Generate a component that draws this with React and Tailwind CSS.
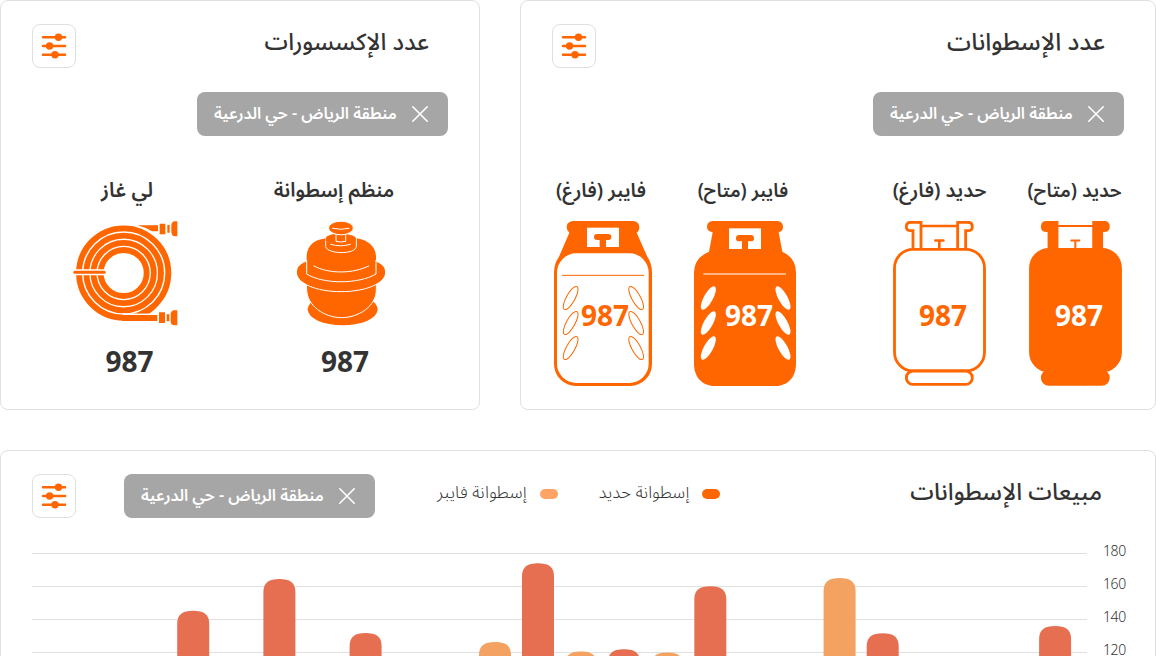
const FONT = "font-['Noto_Sans_Arabic','Noto_Sans',sans-serif]";

function FilterButton() {
  return (
    <button className="flex size-11 shrink-0 items-center justify-center rounded-lg border border-[#e0e0e0] bg-white">
      <svg width="26" height="26" viewBox="0 0 26 26" stroke="#ff6600" strokeWidth="2.5" strokeLinecap="round" fill="#ff6600">
        <path d="M2 4.300H24M2 13H24M2 21.700H24" />
        <g stroke="none">
          <circle cx="17.5" cy="4.3" r="3.7" />
          <circle cx="8.6" cy="13" r="3.7" />
          <circle cx="14" cy="21.7" r="3.7" />
        </g>
      </svg>
    </button>
  );
}

function Chip() {
  return (
    <div className="flex h-11 w-[251px] shrink-0 items-center justify-between rounded-lg bg-[#a6a6a6] pl-[17px] pr-5 text-white">
      <span dir="rtl" className="whitespace-nowrap text-[16.1px] font-semibold leading-6">منطقة الرياض - حي الدرعية</span>
      <svg width="16" height="16" viewBox="0 0 16 16" stroke="currentColor" strokeWidth="1.6" strokeLinecap="round">
        <path d="M0.8 0.8L15.2 15.2M15.2 0.8L0.8 15.2" />
      </svg>
    </div>
  );
}

function Title({ children, className }) {
  return <h2 dir="rtl" className={"mt-px whitespace-nowrap font-medium leading-[35px] text-[#333333] " + className}>{children}</h2>;
}

function IronCylinder({ full }) {
  const thin = full ? 6 : 8;
  return (
    <svg width="93" height="165" viewBox="39 33 279 495" fill="none" stroke="#ff6600" strokeWidth="8.5">
      <path fill={full ? "#ff6600" : "none"} d="M123 117V37H92Q79 37 79 50Q79 62 92 62H99V117" />
      <path fill={full ? "#ff6600" : "none"} d="M233 117V37H264Q277 37 277 50Q277 62 264 62H257V117" />
      <path strokeWidth={thin} d="M124 48H232M178 92V116" />
      <path strokeWidth={thin} strokeLinecap="round" d="M166 91.5H190" />
      <rect x="43.5" y="118" width="270" height="365" rx="56" fill={full ? "#ff6600" : "white"} />
      <rect x="79" y="483" width="198" height="40" rx="20" fill={full ? "#ff6600" : "white"} />
    </svg>
  );
}

const leaves = [264, 339, 414];

function FiberEmpty() {
  return (
    <svg width="98" height="165" viewBox="42 33 294 495" fill="#ff6600">
      <path d="M98 33H280Q298 35 298 52Q298 64 290 68L322 140Q336 160 336 188V462A66 66 0 0 1 270 528H108A66 66 0 0 1 42 462V188Q42 160 57 140L88 68Q80 62 80 52Q80 35 98 33Z" />
      <rect x="51" y="130" width="275" height="389" rx="58" fill="white" />
      <path fill="white" d="M141 53H237V111H141Z" />
      <rect x="162" y="72" width="52" height="18" rx="9" />
      <path d="M179 88H198V113H179Z" />
      <path d="M66 196H312" stroke="#ff6600" strokeWidth="3" />
      {leaves.map((y) => (
        <g key={y} fill="none" stroke="#ff6600" strokeWidth="3">
          <ellipse cx="92" cy={y} rx="13" ry="39" transform={`rotate(29 92 ${y})`} />
          <ellipse cx="288.5" cy={y} rx="13" ry="39" transform={`rotate(-29 288.5 ${y})`} />
        </g>
      ))}
    </svg>
  );
}

function FiberFull() {
  return (
    <svg width="102" height="165" viewBox="462 33 306 495" fill="#ff6600">
      <path d="M518 33H712Q729 35 729 51Q729 64 716 67L727 125Q768 144 768 188V466Q764 520 714 528H516Q466 520 462 466V188Q462 144 507 125L518 67Q501 64 501 51Q501 35 518 33Z" />
      <path fill="white" d="M567 55H663V117H567Z" />
      <rect x="588" y="75" width="54" height="19" rx="9.5" />
      <path d="M606 90H624V119H606Z" />
      <path d="M490 192H738" stroke="#ffd0b0" strokeWidth="4" />
      {leaves.map((y) => (
        <g key={y} fill="white">
          <ellipse cx="505" cy={y} rx="13.5" ry="39.5" transform={`rotate(29 505 ${y})`} />
          <ellipse cx="729" cy={y} rx="13.5" ry="39.5" transform={`rotate(-29 729 ${y})`} />
        </g>
      ))}
    </svg>
  );
}

function Hose() {
  return (
    <svg width="105" height="105" viewBox="68 32 315 315" fill="#ff6600">
      <g fill="none" stroke="#ff6600" strokeWidth="17.5">
        <circle cx="220" cy="188" r="134" />
        <circle cx="220" cy="188" r="112" />
        <circle cx="220" cy="188" r="90.5" />
        <circle cx="220" cy="188" r="69" />
      </g>
      <path fill="white" d="M218 309.500H330V335H218Z" />
      <path d="M258 309Q285 296 305 282L324 284Q312 300 298 309Z" />
      <path d="M214 314H321V332H214Z" />
      <path d="M262 45H323V63H305Q285 51 262 45Z" />
      <path d="M328 40H345V72H328ZM351 44H358V67H351ZM371 33H381V78H371Q363 74 363 66V44Q363 36 371 33Z" />
      <path d="M326 306H344V338H326ZM349 312H357V333H349ZM370 300H381V345H370Q361 342 361 334V311Q361 303 370 300Z" />
      <path fill="white" d="M68 177H166V195H68Z" />
      <rect x="69" y="181" width="97" height="9.5" rx="4.5" />
    </svg>
  );
}

function Regulator() {
  return (
    <svg width="88" height="105" viewBox="741 32 264 315" fill="#ff6600" stroke="white" strokeWidth="3" strokeLinecap="round">
      <ellipse cx="878" cy="297" rx="105" ry="48" stroke="none" />
      <path d="M770 220H979V238C979 288 925 322 875 322C822 322 770 285 770 238Z" />
      <path d="M739 186C739 168 752 158 775 150H972C994 158 1007 168 1007 186C1007 220 945 244 873 244C800 244 739 220 739 186Z" />
      <path stroke="none" d="M770 190V136C772 105 793 88 829 84H919C953 89 977 108 978 138V190C955 222 795 222 770 190Z" />
      <path fill="none" d="M770 150V191C820 222 925 222 978 191V150M792 167C838 192 910 190 956 167" />
      <path d="M827 83V108C830 132 917 134 919 108V83" />
      <path stroke="none" d="M827 83C832 66 912 66 918 84V92H827Z" />
      <path fill="none" d="M842 102Q872 111 901 102" />
      <path d="M858 70V93Q872 97 887 93V70" />
      <ellipse cx="873" cy="53" rx="37.5" ry="20.5" />
      <path fill="none" d="M848 54Q873 60 897 54" />
    </svg>
  );
}

const label = "mb-3.5 mt-px h-8 whitespace-nowrap font-semibold leading-8 text-[#333333] ";

function Product({ name, nameClass, width, tone, shift, children }) {
  return (
    <div className={"flex flex-col items-center " + width}>
      <h3 dir="rtl" className={label + nameClass}>{name}</h3>
      <div className="grid place-items-center">
        <div className="col-start-1 row-start-1">{children}</div>
        <span className={"col-start-1 row-start-1 mt-7 text-[28px] font-bold leading-none " + tone + " " + shift}>987</span>
      </div>
    </div>
  );
}

function Accessory({ name, nameClass, width, pad, children }) {
  return (
    <div className={"flex flex-col items-center " + width}>
      <h3 dir="rtl" className={label + nameClass}>{name}</h3>
      {children}
      <span className={"mt-6 text-[28px] font-bold leading-none text-[#333333] " + pad}>987</span>
    </div>
  );
}

const bars = [
  [145.2, 70.8, "#e76f51"],
  [231.4, 39, "#e76f51"],
  [317.6, 93, "#e76f51"],
  [447, 102, "#f4a261"],
  [490, 23.2, "#e76f51"],
  [533, 111.5, "#f4a261"],
  [576, 109.2, "#e76f51"],
  [619.2, 112.6, "#f4a261"],
  [662.3, 46.3, "#e76f51"],
  [791.6, 38, "#f4a261"],
  [834.7, 93.2, "#e76f51"],
  [1007.1, 86, "#e76f51"],
];

function Chart() {
  return (
    <div className="flex">
      <svg width="1055" height="140" viewBox="0 0 1055 140" className="shrink-0">
        <path d="M0 13.500H1055M0 46.500H1055M0 79.500H1055M0 112.500H1055" stroke="#e0e0e0" />
        {bars.map(([x, y, fill]) => (
          <path key={x} fill={fill} d={`M${x} 140V${y + 13}C${x} ${y + 3.5} ${x + 5.5} ${y} ${x + 16} ${y}S${x + 32} ${y + 3.5} ${x + 32} ${y + 13}V140Z`} />
        ))}
      </svg>
      <div className="flex w-[39px] flex-col gap-[22px] pl-4 pt-1.5 text-left text-sm font-[350] leading-[11px] tracking-[-0.4px] text-[#333333]">
        <div>180</div>
        <div>160</div>
        <div>140</div>
        <div>120</div>
      </div>
    </div>
  );
}

function LegendItem({ name, nameClass, color }) {
  return (
    <div className="flex items-center gap-[13px]">
      <span dir="rtl" className={"whitespace-nowrap font-light leading-6 text-[#333333] " + nameClass}>{name}</span>
      <span className={"mt-0.5 h-2.5 w-[18px] rounded-full " + color} />
    </div>
  );
}

const card = "rounded-lg border border-[#e0e0e0] bg-white";

export default function App() {
  return (
    <main dir="ltr" className={"flex h-[656px] w-[1156px] flex-col gap-10 overflow-hidden bg-white " + FONT}>
      <div className="flex shrink-0 gap-10">
        <section className={"h-[410px] w-[480px] px-[31px] pt-[23px] " + card}>
          <div className="flex items-start justify-between">
            <FilterButton />
            <Title className="mr-[19px] text-[23.6px]">عدد الإكسسورات</Title>
          </div>
          <div className="mt-6 flex justify-end"><Chip /></div>
          <div className="mt-[38px] flex pl-[27px]">
            <Accessory name="لي غاز" nameClass="text-[20.4px]" width="w-[136px]" pad="ml-[5px]"><div className="-ml-[3px]"><Hose /></div></Accessory>
            <Accessory name="منظم إسطوانة" nameClass="-ml-[4px] text-xl" width="ml-[66px] w-[150px]" pad="ml-[18px]"><div className="ml-[9px]"><Regulator /></div></Accessory>
          </div>
        </section>
        <section className={"h-[410px] w-[636px] px-[31px] pt-[23px] " + card}>
          <div className="flex items-start justify-between">
            <FilterButton />
            <Title className="mr-[19px] text-[24.2px]">عدد الإسطوانات</Title>
          </div>
          <div className="mt-6 flex justify-end"><Chip /></div>
          <div className="mt-[38px] flex">
            <Product name="فايبر (فارغ)" nameClass="-ml-[4px] text-[19.6px]" width="w-[102px]" tone="text-[#ff6600]" shift="ml-[4px]"><FiberEmpty /></Product>
            <Product name="فايبر (متاح)" nameClass="-ml-[4px] text-[19px]" width="ml-[40px] w-[102px]" tone="text-white" shift="ml-[8px]"><FiberFull /></Product>
            <Product name="حديد (فارغ)" nameClass="text-[19.8px]" width="ml-[97px] w-[93px]" tone="text-[#ff6600]" shift="ml-[7px]"><IronCylinder /></Product>
            <Product name="حديد (متاح)" nameClass="-ml-[2px] text-[19.2px]" width="ml-[43px] w-[93px]" tone="text-white" shift="ml-[7px]"><IronCylinder full /></Product>
          </div>
        </section>
      </div>
      <section className={"h-[500px] w-[1156px] shrink-0 px-[31px] pt-[23px] " + card}>
        <div className="flex items-start">
          <FilterButton />
          <div className="ml-12"><Chip /></div>
          <div className="ml-[62px] mt-[7px] flex gap-[41px]">
            <LegendItem name="إسطوانة فايبر" nameClass="text-[17.4px]" color="bg-[#ffa366]" />
            <LegendItem name="إسطوانة حديد" nameClass="text-[17.1px]" color="bg-[#ff6600]" />
          </div>
          <Title className="ml-auto mr-[22px] text-[23.7px]">مبيعات الإسطوانات</Title>
        </div>
        <div className="mt-[22px]"><Chart /></div>
      </section>
    </main>
  );
}
